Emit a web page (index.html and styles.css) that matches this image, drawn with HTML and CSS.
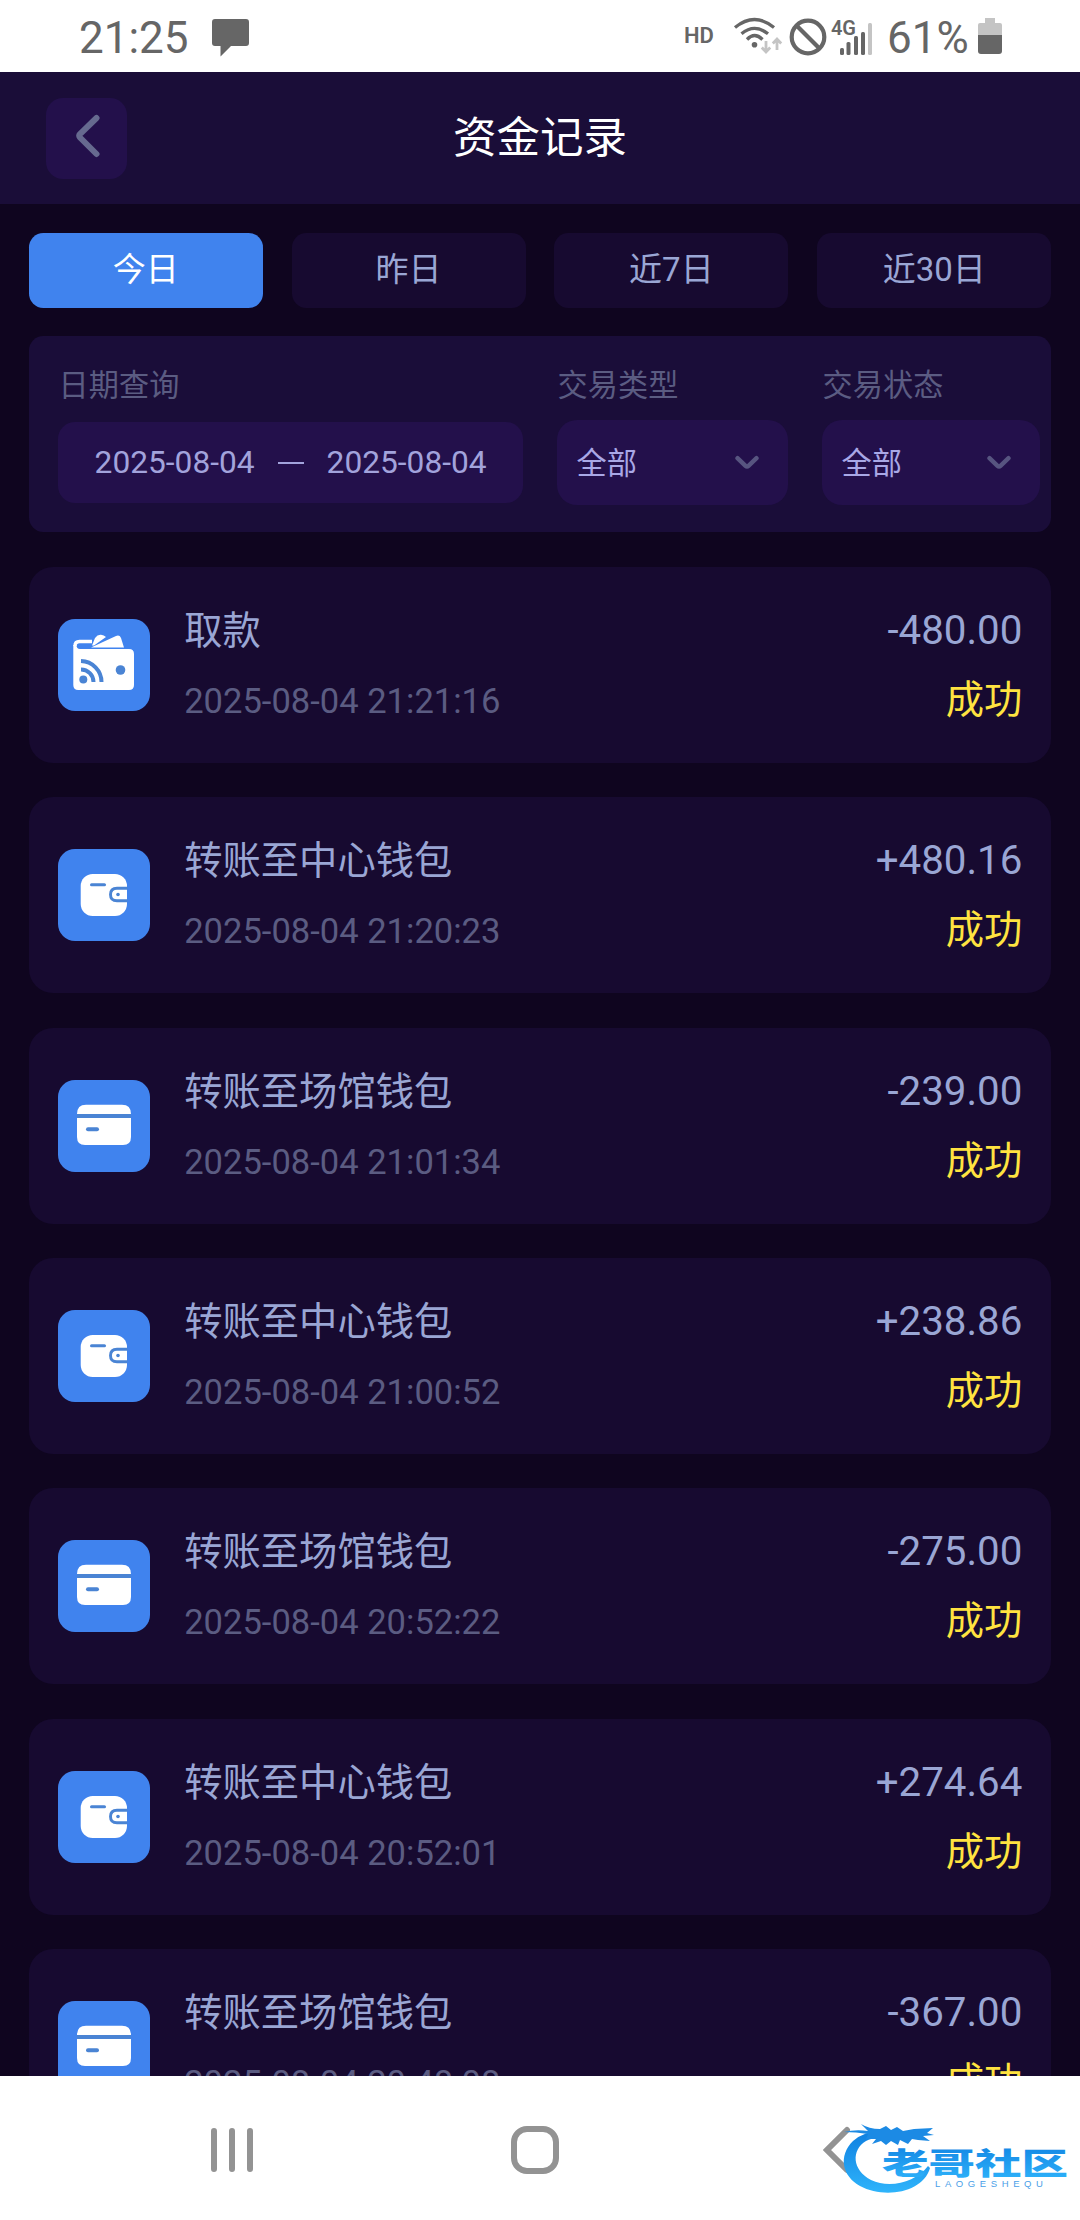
FILE: index.html
```html
<!DOCTYPE html>
<html lang="zh-CN">
<head>
<meta charset="utf-8">
<title>资金记录</title>
<link rel="stylesheet" href="styles.css">
</head>
<body>
<svg class="defs" width="0" height="0" aria-hidden="true">
  <symbol id="withdraw" viewBox="0 0 92 92">
    <path d="M34 26.500L37 19Q39.500 15.500 43 15.800Q46 16 48 18L36 26.500Z" fill="#fff"/>
    <path d="M33 28.500L58 17Q61.500 15.500 63 19L66 28.500Z" fill="#fff"/>
    <path d="M34 22.500H21.500Q17 22.500 17 27" fill="none" stroke="#fff" stroke-width="3.400"/>
    <path d="M15.300 26V66Q15.300 71 20.300 71H71Q76 71 76 66V35Q76 30 71 30H22Q18.500 30 18.500 26Z" fill="#fff"/>
    <circle cx="62.500" cy="51" r="4.800" fill="#4a84d4"/>
    <circle cx="25.300" cy="60.500" r="4" fill="#4a84d4"/>
    <path d="M23 50.500A12.500 12.500 0 0 1 35.500 63M23 42A21 21 0 0 1 43.500 63" fill="none" stroke="#4a84d4" stroke-width="4"/>
  </symbol>
  <symbol id="wallet" viewBox="0 0 92 92">
    <rect x="22.700" y="25" width="46.300" height="42" rx="12" fill="#fff"/>
    <path d="M33.500 35.800H46.500" stroke="#4a84d4" stroke-width="3" stroke-linecap="round"/>
    <path d="M69.500 39.200H59Q52.500 39.200 52.500 45.500T59 51.800H69.500" fill="none" stroke="#4a84d4" stroke-width="2.900"/>
    <circle cx="60" cy="45.500" r="1.800" fill="#4a84d4"/>
  </symbol>
  <symbol id="card" viewBox="0 0 92 92">
    <path d="M19 34Q19 24.700 28 24.700H64Q73 24.700 73 34ZM19 38H73V57Q73 65 65 65H27Q19 65 19 57Z" fill="#fff"/>
    <path d="M19 36H73" stroke="#4a84d4" stroke-width="4"/>
    <path d="M30 49.200H39" stroke="#4a84d4" stroke-width="4" stroke-linecap="round"/>
  </symbol>
  <symbol id="caret" viewBox="0 0 24 16"><path d="M2.500 3.200L10.500 10.800Q12 12.200 13.500 10.800L21.500 3.200" fill="none" stroke="#575580" stroke-width="4.400" stroke-linecap="round"/></symbol>
</svg>

<div class="statusbar">
  <span class="clock">21:25</span>
  <svg class="bubble" width="38" height="38" viewBox="0 0 38 38"><path d="M3 0H34Q37 0 37 3V24Q37 27 34 27H19L8.500 37.500V27H3Q0 27 0 24V3Q0 0 3 0Z" fill="#666"/></svg>
  <span class="hd">HD</span>
  <svg class="wifi" width="50" height="40" viewBox="0 0 50 40" fill="none" stroke="#666" stroke-width="3.300">
    <path d="M2 11.500Q21.500 -4.500 41 11.500M8.500 17.800Q21.500 7 35 17.800M14 23.500Q21.500 15.500 29.500 23.500"/>
    <circle cx="21.500" cy="28.800" r="2.800" fill="#666" stroke="none"/>
    <path d="M33 25V36M28.800 31.500L33 36L37.200 31.500M44 34V24M39.800 27.500L44 23L48.200 27.500" stroke="#c4c4c4" stroke-width="2.800"/>
  </svg>
  <svg class="block" width="38" height="38" viewBox="0 0 38 38" fill="none" stroke="#666" stroke-width="4.200"><circle cx="19" cy="19" r="16.300"/><path d="M7.500 7.500L30.500 30.500"/></svg>
  <svg class="signal" width="42" height="38" viewBox="0 0 42 38" fill="#666">
    <text x="0" y="17" class="net">4G</text>
    <rect x="9" y="30" width="4" height="7" rx="1.500"/><rect x="15.500" y="24" width="4" height="13" rx="1.500"/><rect x="23" y="18" width="4" height="19" rx="1.500"/><rect x="30" y="14" width="4" height="23" rx="1.500"/><rect x="37" y="5" width="4" height="32" rx="1.500" fill="#c4c4c4"/>
  </svg>
  <span class="percent">61%</span>
  <svg class="battery" width="24" height="36" viewBox="0 0 24 36"><path d="M7 0H17V5H22Q24 5 24 7V17H0V7Q0 5 2 5H7Z" fill="#c4c4c4"/><path d="M0 17H24V33Q24 36 21 36H3Q0 36 0 33Z" fill="#666"/></svg>
</div>

<header class="header">
  <button class="back" aria-label="返回"><svg width="26" height="44" viewBox="0 0 26 44"><path d="M21.500 4L5 20Q3.500 21.800 5 23.500L21.500 40" fill="none" stroke="#666a8f" stroke-width="6" stroke-linecap="round"/></svg></button>
  <h1>资金记录</h1>
</header>

<main class="content">
  <nav class="tabs"><span class="tab active">今日</span><span class="tab">昨日</span><span class="tab">近7日</span><span class="tab">近30日</span></nav>
  <section class="filters">
    <div class="field dates"><label>日期查询</label><div class="range"><span>2025-08-04</span><i></i><span>2025-08-04</span></div></div>
    <div class="field type"><label>交易类型</label><div class="select"><span>全部</span><svg width="24" height="16"><use href="#caret"/></svg></div></div>
    <div class="field state"><label>交易状态</label><div class="select"><span>全部</span><svg width="24" height="16"><use href="#caret"/></svg></div></div>
  </section>
  <section class="list">
    <article class="record"><svg class="icon"><use href="#withdraw"/></svg><div class="info"><h2>取款</h2><time>2025-08-04 21:21:16</time></div><div class="result"><b>-480.00</b><em>成功</em></div></article>
    <article class="record"><svg class="icon"><use href="#wallet"/></svg><div class="info"><h2>转账至中心钱包</h2><time>2025-08-04 21:20:23</time></div><div class="result"><b>+480.16</b><em>成功</em></div></article>
    <article class="record"><svg class="icon"><use href="#card"/></svg><div class="info"><h2>转账至场馆钱包</h2><time>2025-08-04 21:01:34</time></div><div class="result"><b>-239.00</b><em>成功</em></div></article>
    <article class="record"><svg class="icon"><use href="#wallet"/></svg><div class="info"><h2>转账至中心钱包</h2><time>2025-08-04 21:00:52</time></div><div class="result"><b>+238.86</b><em>成功</em></div></article>
    <article class="record"><svg class="icon"><use href="#card"/></svg><div class="info"><h2>转账至场馆钱包</h2><time>2025-08-04 20:52:22</time></div><div class="result"><b>-275.00</b><em>成功</em></div></article>
    <article class="record"><svg class="icon"><use href="#wallet"/></svg><div class="info"><h2>转账至中心钱包</h2><time>2025-08-04 20:52:01</time></div><div class="result"><b>+274.64</b><em>成功</em></div></article>
    <article class="record"><svg class="icon"><use href="#card"/></svg><div class="info"><h2>转账至场馆钱包</h2><time>2025-08-04 20:48:08</time></div><div class="result"><b>-367.00</b><em>成功</em></div></article>
  </section>
</main>

<footer class="navbar">
  <svg width="42" height="48" viewBox="0 0 42 48" stroke="#939393" stroke-width="6" stroke-linecap="round"><path d="M3 5V43M21 5V43M39 5V43"/></svg>
  <svg class="home" width="48" height="48" viewBox="0 0 48 48"><rect x="3" y="3" width="42" height="42" rx="13" fill="none" stroke="#939393" stroke-width="6"/></svg>
  <svg width="28" height="48" viewBox="0 0 28 48"><path d="M24 4L4 24L24 44" fill="none" stroke="#939393" stroke-width="6" stroke-linecap="round"/></svg>
</footer>

<svg class="watermark" width="250" height="90" viewBox="0 0 250 90">
  <defs><linearGradient id="wm" x1="0" y1="0" x2="0" y2="1"><stop offset="0" stop-color="#0f7fe0"/><stop offset="1" stop-color="#2fb4fb"/></linearGradient></defs>
  <path d="M64 19Q43 18 31 29C16 44 20 64 38 74C62 87 101 81 108 56L106 54C94 70 68 77 49 68C30 58 29 38 44 29Q52 24 68 27Z" fill="url(#wm)"/>
  <path d="M22 20Q34 17 46 19L39 12Q47 17 58 17L64 14L69 18L75 15L81 19L92 17L111 16L105 21L112 23L101 24L108 29L96 28L90 27L86 32L78 28L76 33L69 29L64 33L59 29L50 32L54 27L44 27L46 22Q34 20 22 20Z" fill="#1c8ae4"/>
  <text class="wm-title" transform="translate(60 61.500) scale(1.55 1)">老哥社区</text>
  <text class="wm-sub" x="113" y="74.500">LAOGESHEQU</text>
</svg>
</body>
</html>
```
FILE: styles.css
```css
* { box-sizing: border-box; margin: 0; padding: 0; }

body {
  width: 1080px;
  height: 2220px;
  overflow: hidden;
  position: relative;
  display: flex;
  flex-direction: column;
  background: #0f051f;
  color: #9aa6d4;
  font-family: Roboto, "Noto Sans CJK SC", sans-serif;
}

.defs { position: absolute; }
svg { display: block; flex: none; }

.statusbar {
  flex: none;
  height: 72px;
  display: flex;
  align-items: flex-start;
  padding: 18px 78px 0 79px;
  background: #fff;
  color: #666;
}
.clock, .percent { font-size: 44px; line-height: 52px; height: 52px; margin-top: -6px; }
.clock { width: 133px; }
.bubble { margin-top: 1px; }
.hd { margin: 7px 0 0 auto; font-size: 22px; line-height: 22px; font-weight: 600; width: 49px; }
.wifi { margin: -2px 6px 0 0; }
.block { margin-right: 4px; }
.signal { overflow: visible; margin-right: 14px; }
.net { font-size: 20px; font-weight: 600; letter-spacing: -0.3px; }
.percent { width: 91px; }

.header {
  flex: none;
  height: 132px;
  display: grid;
  grid-template-columns: 81px 1fr 81px;
  align-items: center;
  padding: 0 46px;
  background: #1a0d38;
}
.back {
  width: 81px;
  height: 81px;
  display: grid;
  place-items: center;
  padding: 0 0 5px 2px;
  border: 0;
  border-radius: 17px;
  background: #23104b;
}
.header h1 { text-align: center; font-size: 43.5px; line-height: 60px; font-weight: 400; color: #fff; padding-top: 1px; }

.content { flex: none; height: 1872px; overflow: hidden; padding: 28.8px 28.8px 0; }

.tabs { display: grid; grid-template-columns: repeat(4, 1fr); gap: 28.8px; height: 74.9px; }
.tab {
  border-radius: 14.4px;
  background: #170a30;
  text-align: center;
  font-size: 33px;
  line-height: 73px;
}
.tab.active { background: #4083ee; color: #fff; }

.filters {
  display: flex;
  height: 196px;
  margin: 28.8px 0 34.6px;
  padding: 30px 0 0 28.8px;
  border-radius: 14.4px;
  background: #1a0d39;
}
.field label { display: block; height: 40px; padding-left: 1px; font-size: 30.2px; line-height: 40px; color: #5b5c82; }
.dates { width: 465px; margin-right: 34px; }
.type { width: 231px; margin-right: 34px; }
.state { width: 218px; }
.range, .select { display: flex; align-items: center; background: #23104b; }
.range { height: 81px; margin-top: 16px; padding: 0 36px 0 37px; justify-content: space-between; border-radius: 17px; font-size: 31.7px; color: #a2a3dc; }
.range i { width: 26px; height: 2.500px; background: #a2a3dc; }
.select { height: 85px; margin-top: 14px; padding: 0 29px 0 20px; justify-content: space-between; border-radius: 20px; font-size: 30.2px; color: #a9a8e6; }
.select span { padding-bottom: 4px; }

.list { display: flex; flex-direction: column; gap: 34.56px; }
.record {
  flex: none;
  display: flex;
  align-items: center;
  height: 195.8px;
  padding: 0 28.8px;
  border-radius: 24px;
  background: #170a30;
}
.icon { width: 92px; height: 92px; margin-right: 34.6px; border-radius: 17px; background: #4083ee; }
.info { flex: 1; padding-bottom: 4px; }
.info h2 { font-size: 38.3px; line-height: 56px; font-weight: 400; }
.info time { display: block; margin-top: 20px; font-size: 34.56px; line-height: 44px; color: #5b5c82; }
.result { text-align: right; padding-top: 2px; }
.result b { display: block; font-size: 40.3px; line-height: 54px; font-weight: 400; }
.result em { display: block; margin-top: 14px; font-size: 38.3px; line-height: 56px; font-style: normal; color: #ffe340; }

.navbar {
  flex: none;
  height: 144px;
  display: flex;
  align-items: flex-start;
  justify-content: space-between;
  padding: 50px 229px 0 211px;
  background: #fff;
}
.home { margin-right: 7px; }

/* Community stamp laid over the navigation bar */
.watermark { position: absolute; left: 822px; top: 2112px; }
.wm-title { font-family: "Noto Sans CJK SC", sans-serif; font-size: 30px; font-weight: 900; fill: url(#wm); }
.wm-sub { font-family: "Liberation Sans", sans-serif; font-size: 9.5px; letter-spacing: 4.6px; fill: #4aa0e8; }
```
